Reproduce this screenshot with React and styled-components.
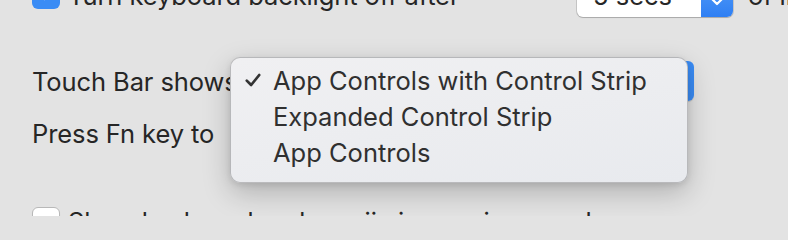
import React from 'react';
import styled, { createGlobalStyle } from 'styled-components';

const blue = '#3a8cf5';
const textColor = '#262626';

const GlobalStyle = createGlobalStyle`
  html, body {
    margin: 0;
    padding: 0;
    background: #e3e3e3;
    overflow: hidden;
  }
  body {
    font-family: Inter, "Liberation Sans", sans-serif;
    font-size: 25.5px;
    color: ${textColor};
    -webkit-font-smoothing: antialiased;
  }
`;

const Panel = styled.div`
  width: 788px;
  height: 216px;
  overflow: hidden;
  padding-left: 32px;
  box-sizing: border-box;
`;

const Row = styled.div`
  display: flex;
  align-items: center;
  height: ${({ h }) => h}px;
  margin-top: ${({ mt }) => mt}px;
  white-space: nowrap;
`;

const CheckBox = styled.span`
  flex: 0 0 auto;
  width: 28px;
  height: 28px;
  box-sizing: border-box;
  border-radius: 6px;
  display: flex;
  align-items: center;
  justify-content: center;
  background: ${({ checked }) => (checked ? blue : '#fff')};
  border: ${({ checked }) => (checked ? 'none' : '1px solid #b8b8b8')};
  box-shadow: ${({ checked }) => (checked ? 'none' : '0 1px 1px rgba(0,0,0,0.08)')};
`;

const Label = styled.span`
  flex: 0 0 auto;
  margin-left: ${({ ml }) => ml || 0}px;
  width: ${({ w }) => (w ? `${w}px` : 'auto')};
  letter-spacing: -0.1px;
`;

const SelectBox = styled.div`
  flex: 0 0 auto;
  display: flex;
  width: 156px;
  height: 44px;
  border-radius: 6px;
  overflow: hidden;
  background: #fff;
  box-shadow: 0 0 0 1px rgba(0, 0, 0, 0.12), 0 1px 1px rgba(0, 0, 0, 0.15);
`;

const SelectValue = styled.span`
  flex: 1;
  display: flex;
  align-items: center;
  padding-left: 16px;
`;

const Stepper = styled.span`
  width: 32px;
  display: flex;
  align-items: center;
  justify-content: center;
  background: linear-gradient(#5aa2f9, #2f7ff3);
`;

const PopupWrap = styled.div`
  position: relative;
  margin-left: 8px;
  flex: 0 0 auto;
`;

const PopupButton = styled.div`
  width: 456px;
  height: 40px;
  border-radius: 6px;
  background: linear-gradient(90deg, #fff 92%, ${blue} 92%);
  box-shadow: 0 1px 1px rgba(0, 0, 0, 0.15);
`;

const Menu = styled.ul`
  position: absolute;
  left: -8px;
  top: -4px;
  width: 458px;
  margin: 0;
  padding: 4px 0 12px;
  box-sizing: border-box;
  list-style: none;
  background: linear-gradient(170deg, #f0f0f2, #e8eaee);
  border: 1px solid rgba(0, 0, 0, 0.22);
  border-radius: 10px;
  box-shadow: 0 10px 28px rgba(0, 0, 0, 0.22), 0 2px 6px rgba(0, 0, 0, 0.1);
  z-index: 2;
`;

const MenuItem = styled.li`
  display: flex;
  align-items: center;
  height: 36px;
  padding-left: 12px;
  color: #303030;
`;

const CheckSlot = styled.span`
  width: 20px;
  margin-right: 10px;
  display: flex;
  align-items: center;
`;

const Check = ({ color = '#fff', size = 16 }) => (
  <svg width={size} height={size} viewBox="0 0 16 16">
    <path d="M3 8.5 L6.5 12 L13 4" fill="none" stroke={color} strokeWidth="2.2" strokeLinecap="round" strokeLinejoin="round" />
  </svg>
);

const Chevrons = () => (
  <svg width="18" height="30" viewBox="0 0 18 30">
    <path d="M4 11 L9 6 L14 11" fill="none" stroke="#fff" strokeWidth="2.2" strokeLinecap="round" strokeLinejoin="round" />
    <path d="M4 19 L9 24 L14 19" fill="none" stroke="#fff" strokeWidth="2.2" strokeLinecap="round" strokeLinejoin="round" />
  </svg>
);

const items = ['App Controls with Control Strip', 'Expanded Control Strip', 'App Controls'];

export default function App() {
  return (
    <>
      <GlobalStyle />
      <Panel>
        <Row h={44} mt={-27}>
          <CheckBox checked>
            <Check />
          </CheckBox>
          <Label ml={8} w={509}>Turn keyboard backlight off after</Label>
          <SelectBox>
            <SelectValue>5 secs</SelectValue>
            <Stepper>
              <Chevrons />
            </Stepper>
          </SelectBox>
          <Label ml={15}>of inactivity</Label>
        </Row>
        <Row h={40} mt={44}>
          <Label w={198}>Touch Bar shows</Label>
          <PopupWrap>
            <PopupButton />
            <Menu>
              {items.map((item, i) => (
                <MenuItem key={item}>
                  <CheckSlot>{i === 0 && <Check color="#333" size={20} />}</CheckSlot>
                  {item}
                </MenuItem>
              ))}
            </Menu>
          </PopupWrap>
        </Row>
        <Row h={40} mt={12}>
          <Label>Press Fn key to</Label>
        </Row>
        <Row h={28} mt={54}>
          <CheckBox />
          <Label ml={8}>Show keyboard and emoji viewers in menu bar</Label>
        </Row>
      </Panel>
    </>
  );
}
